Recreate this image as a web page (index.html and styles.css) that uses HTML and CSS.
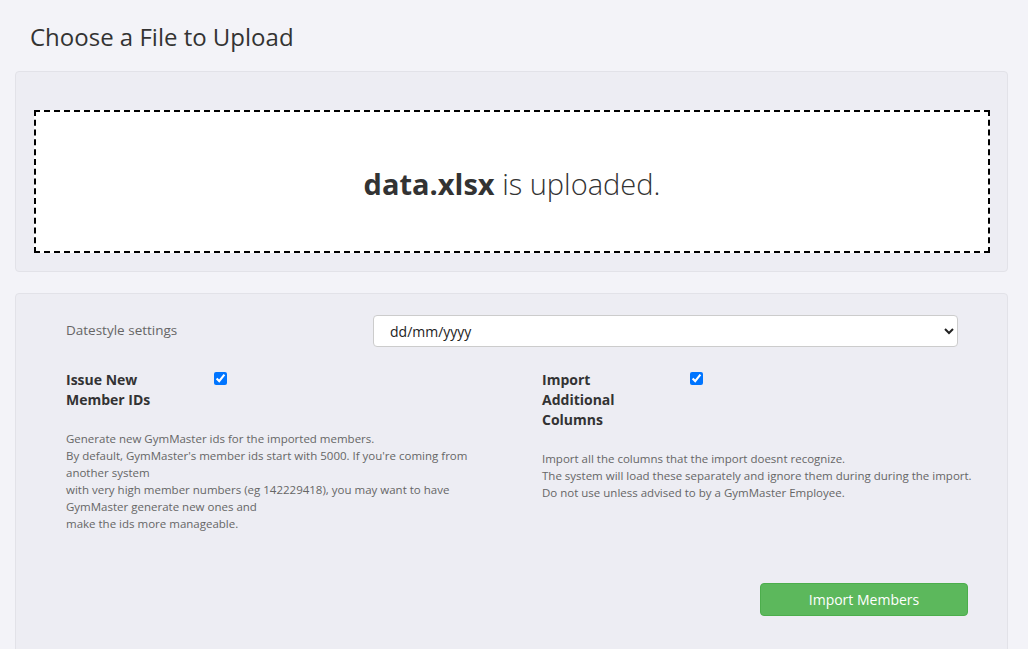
FILE: index.html
```html
<!DOCTYPE html>
<html lang="en">
<head>
    <meta charset="UTF-8">
    <meta name="viewport" content="width=device-width, initial-scale=1.0">
    <title>Import Members</title>
    <link rel="stylesheet" href="styles.css">
</head>
<body>
    <div class="page">
        <h2 class="page-title">Choose a File to Upload</h2>

        <div class="panel upload-panel">
            <div class="dropzone">
                <p><strong>data.xlsx</strong> is uploaded.</p>
            </div>
        </div>

        <div class="panel settings-panel">
            <div class="date-row">
                <label for="datestyle" class="date-label">Datestyle settings</label>
                <select id="datestyle" class="date-select">
                    <option>dd/mm/yyyy</option>
                    <option>mm/dd/yyyy</option>
                    <option>yyyy-mm-dd</option>
                </select>
            </div>

            <div class="options">
                <div class="option">
                    <div class="option-head">
                        <label for="newIds" class="option-label">Issue New Member IDs</label>
                        <input type="checkbox" id="newIds" checked>
                    </div>
                    <p class="option-help">
                        Generate new GymMaster ids for the imported members.<br>
                        By default, GymMaster's member ids start with 5000. If you're coming from another system<br>
                        with very high member numbers (eg 142229418), you may want to have GymMaster generate new ones and<br>
                        make the ids more manageable.
                    </p>
                </div>

                <div class="option">
                    <div class="option-head">
                        <label for="extraCols" class="option-label">Import Additional Columns</label>
                        <input type="checkbox" id="extraCols" checked>
                    </div>
                    <p class="option-help">
                        Import all the columns that the import doesnt recognize.<br>
                        The system will load these separately and ignore them during during the import.<br>
                        Do not use unless advised to by a GymMaster Employee.
                    </p>
                </div>
            </div>

            <div class="actions">
                <button class="btn-import">Import Members</button>
            </div>
        </div>
    </div>
</body>
</html>
```

FILE: styles.css
```css
body {
    margin: 0;
    background-color: #f3f3f8;
    font-family: "Open Sans", "Liberation Sans", sans-serif;
    color: #333;
}

.page {
    padding: 0 20px 0 15px;
}

.page-title {
    margin: 23px 15px 20px;
    font-size: 24px;
    font-weight: 400;
    line-height: 28px;
    color: #333;
}

.panel {
    background-color: #ededf3;
    border: 1px solid #e2e2e8;
    border-radius: 4px;
}

.upload-panel {
    padding: 38px 17px 18px 18px;
    margin-bottom: 21px;
}

.dropzone {
    height: 139px;
    border: 2px dashed #000;
    background-color: #fff;
    display: flex;
    align-items: center;
    justify-content: center;
}

.dropzone p {
    margin: 4px 0 0;
    font-size: 29px;
    font-weight: 300;
    color: #333;
}

.dropzone strong {
    font-weight: 700;
}

.settings-panel {
    padding: 20px 39px 40px 50px;
    height: 400px;
}

.date-row {
    display: grid;
    grid-template-columns: 307px 585px;
    align-items: center;
    padding-top: 1px;
}

.date-label {
    font-size: 13.5px;
    line-height: 18px;
    margin-bottom: 2px;
    color: #666;
}

.date-select {
    height: 32px;
    padding: 0 12px;
    border: 1px solid #ccc;
    border-radius: 4px;
    background-color: #fff;
    font-family: "Open Sans", "Liberation Sans", sans-serif;
    font-size: 14px;
    color: #222;
}

.options {
    display: grid;
    grid-template-columns: 446px 450px;
    column-gap: 30px;
    margin-top: 23px;
}

.option-head {
    display: grid;
    grid-template-columns: 148px auto;
    align-items: start;
}

.option-label {
    width: 115px;
    font-size: 14px;
    font-weight: 700;
    line-height: 20px;
    color: #333;
}

.option-head input {
    margin: 2px 0 0;
    width: 13px;
    height: 13px;
}

.option-help {
    margin: 20px 0 0;
    font-size: 11.5px;
    line-height: 17px;
    color: #666;
}

.actions {
    display: flex;
    justify-content: flex-end;
    margin-top: 51px;
}

.btn-import {
    width: 208px;
    height: 33px;
    background-color: #5cb85c;
    border: 1px solid #4cae4c;
    border-radius: 4px;
    color: #fff;
    font-family: "Open Sans", "Liberation Sans", sans-serif;
    font-size: 14px;
    cursor: pointer;
}

.btn-import:hover {
    background-color: #449d44;
}
```
